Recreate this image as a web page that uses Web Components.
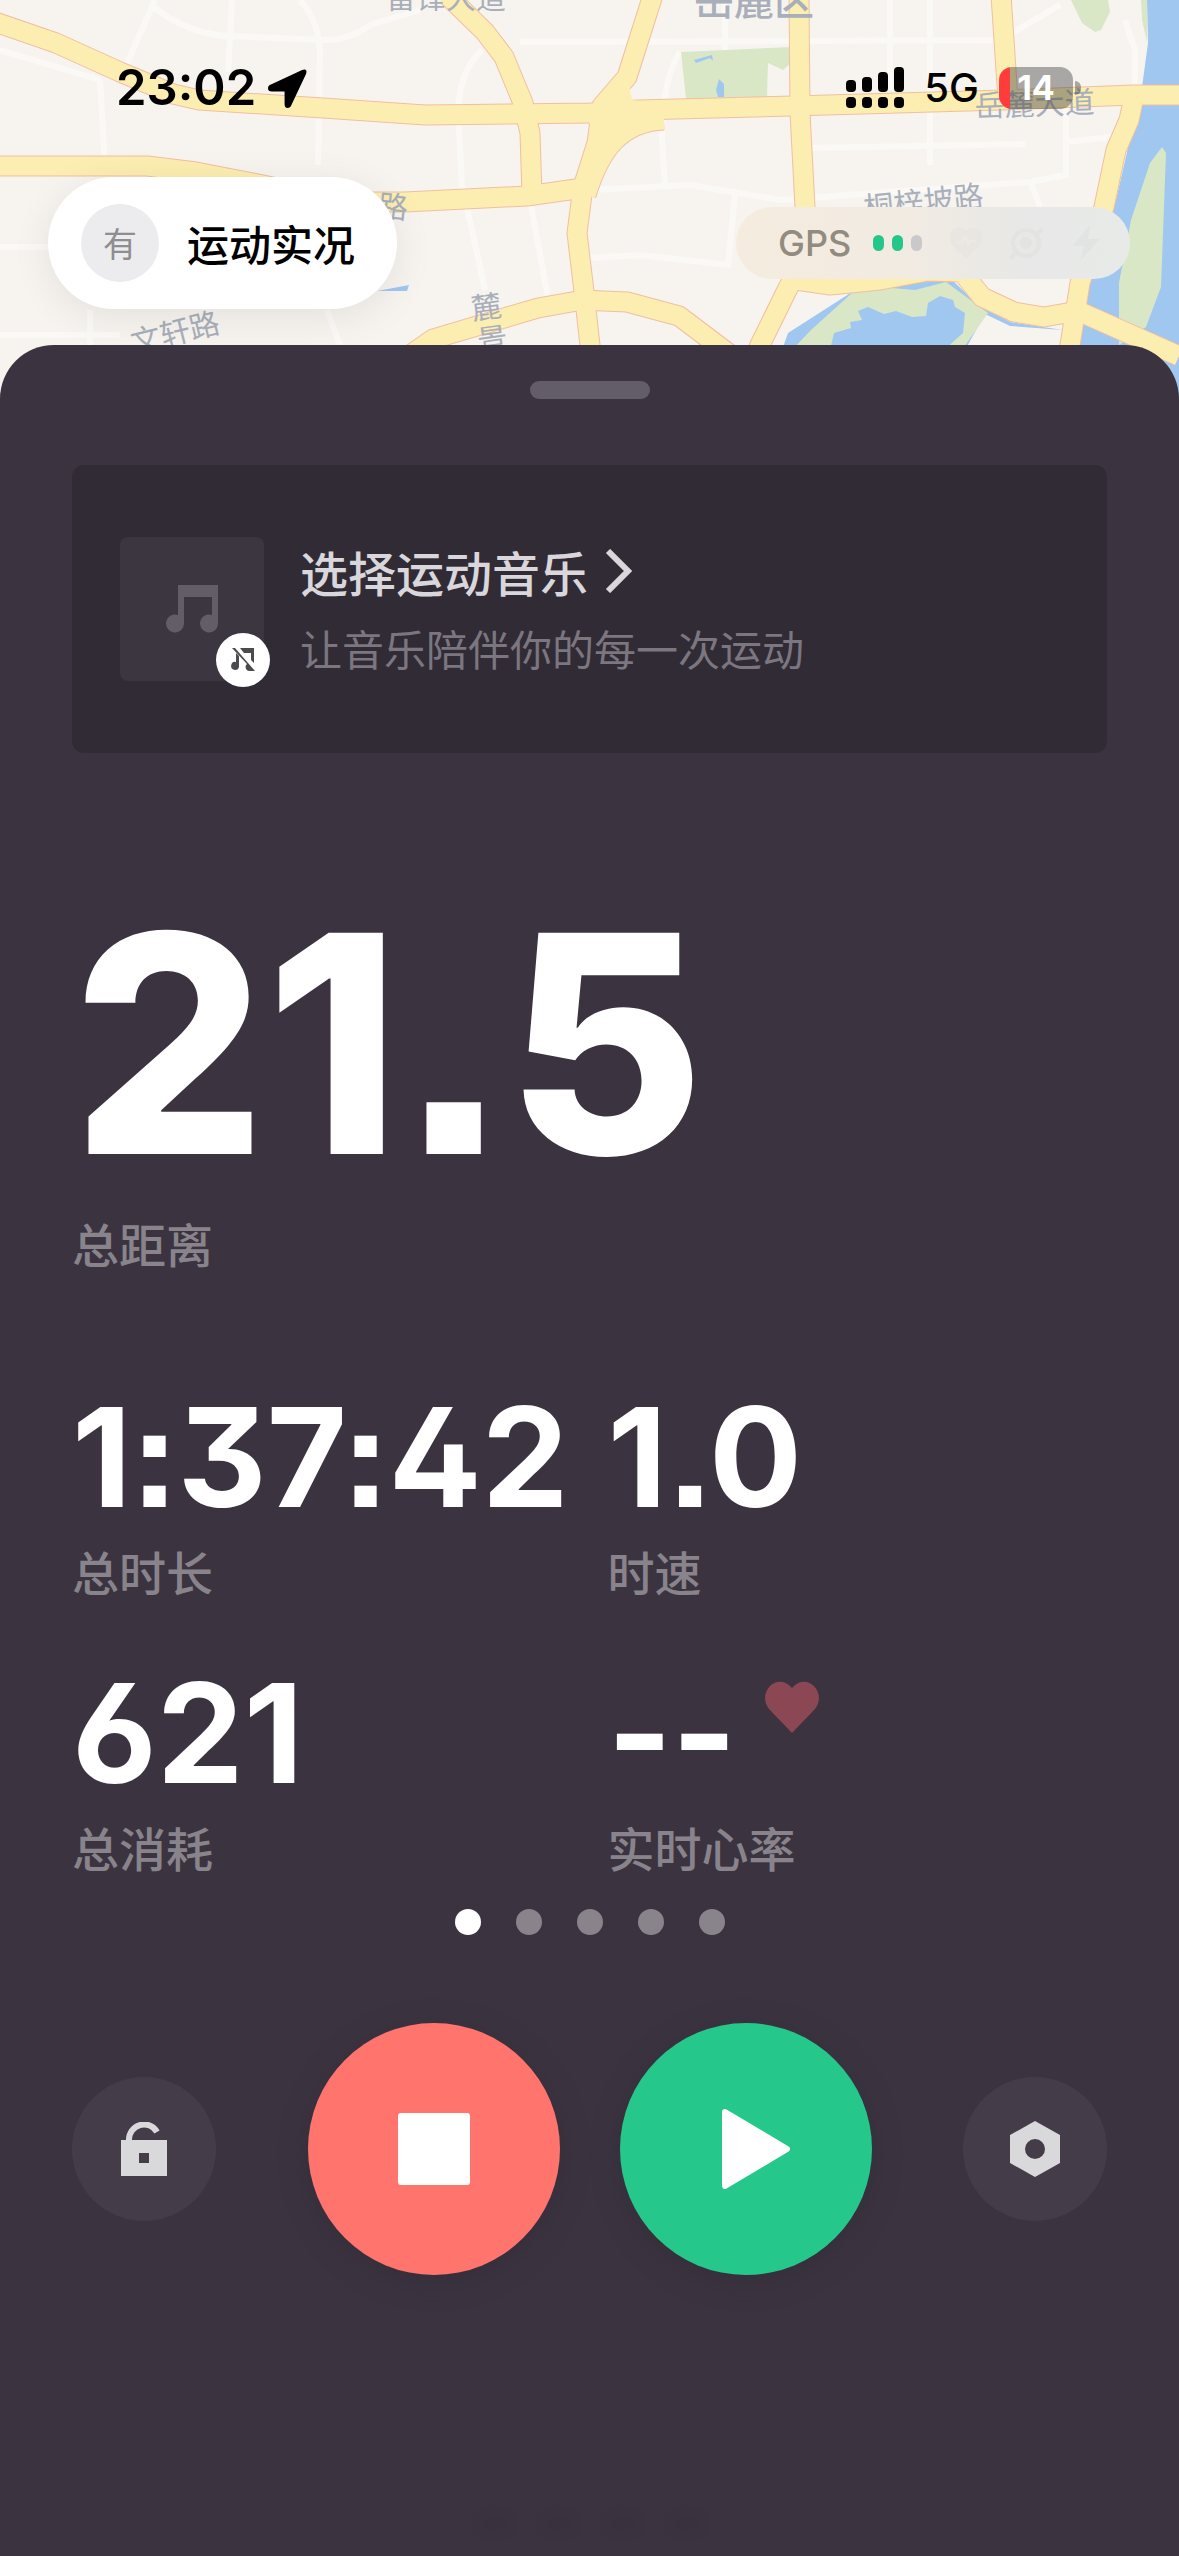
<!DOCTYPE html>
<html lang="zh-CN">
<head>
<meta charset="utf-8">
<meta name="viewport" content="width=device-width, initial-scale=1">
<title>运动实况</title>
<style>
  body {
    margin: 0;
    background: #3b3440;
    font-family: Inter, "Noto Sans CJK SC", sans-serif;
  }
</style>
</head>
<body>
<workout-app></workout-app>

<script>
class MapView extends HTMLElement {
  connectedCallback() {
    this.attachShadow({ mode: 'open' });
    this.shadowRoot.innerHTML = `
      <style>
        :host { display: block; overflow: hidden; background: #f7f4f0; }
        svg { display: block; width: 100%; height: 100%; }
        .street { fill: none; stroke: #fbf9f6; stroke-width: 6; }
        .edge { fill: none; stroke: #f1bfa0; stroke-width: 21; stroke-linejoin: round; }
        .road { fill: none; stroke: #fcedb0; stroke-width: 19; stroke-linejoin: round; }
        .water { fill: #a0c7f0; }
        .park { fill: #d9e7c7; }
        text { font-family: "Noto Sans CJK SC", sans-serif; font-size: 30px; fill: #a9afba; }
        .district { font-size: 40px; font-weight: 500; }
      </style>
      <svg viewBox="0 0 1179 420" preserveAspectRatio="xMidYMin slice" aria-hidden="true">
        <defs>
          <g id="roads">
            <path d="M-5 22 L56 43 L120 72 L173 94 L199 100 L323 108 L425 115 L590 113 L638 110 L792 106 L1003 100 L1134 95 L1184 95"/>
            <path d="M-5 166 H147 L196 172 L263 185 L323 198 L372 202 L405 202 L527 196 L583 188"/>
            <path d="M447 -5 L485 32 L504 57 L523 103 L530 133 L532 196"/>
            <path d="M653 -5 L627 77 L602 106 L597 143 L583 187 L577 233 L583 283 L590 345 V420"/>
            <path d="M664 120 C620 122 600 150 586 195"/>
            <path d="M799 -5 L800 113 L805 207 L804 260 L788 288 L760 345 L730 420"/>
            <path d="M580 300 L627 302 L679 316 L728 353 L760 400"/>
            <path d="M400 362 L433 339 L538 308 L583 300"/>
            <path d="M796 280 L830 285 L880 280 L928 271 L962 272 L982 297 L1014 312 L1044 317 L1078 311 L1179 356"/>
            <path d="M1001 -5 L1008 100"/>
            <path d="M1134 97 L1129 120 L1116 150 L1104 207 L1080 283 L1070 345 V420"/>
          </g>
        </defs>
        <g class="street">
          <path d="M155 0 L125 68 M155 8 Q190 35 230 36 L325 40 Q350 40 370 25 L420 10 M232 0 L228 72 M300 0 Q318 20 320 50 L318 165 M100 80 L105 166 M0 50 L100 80 M482 50 Q460 70 458 110 L462 185 L485 290 M590 42 L1000 40 L1060 5 M725 0 V50 M680 52 Q662 80 662 140 L665 185 M930 0 V165 M890 0 V90 M810 148 L1025 144 M1066 100 V175 L1030 182 L780 200 L690 185 L590 190 M1066 142 L1130 135 M735 195 L728 265 L640 255 L590 258 M1125 20 L1135 50 V90 M0 247 H60 M90 310 V345 M0 335 H120 M530 200 L548 298 M327 310 L340 345 M1030 180 L1040 207 M520 42 H590"/>
        </g>
        <path class="water" d="M1147 0 L1148 43 L1142 87 L1116 200 L1078 317 L1075 420 H1179 V0 Z"/>
        <path class="park" d="M1141 0 H1147 V42 L1142 20 Z M1162 147 L1150 163 L1131 220 L1119 283 V345 L1146 327 L1161 287 L1166 153 Z"/>
        <path class="park" d="M681 52 L792 47 L791 63 L783 70 L768 63 L767 97 L686 99 Z M1071 0 H1108 L1110 12 L1101 30 L1095 32 L1082 23 Z M1048 18 L1062 4 L1056 10 Z"/>
        <path class="water" d="M694 60 L712 55 L713 61 L710 58 L696 63 Z M719 79 L724 84 V97 H718 L716 90 Z M377 291 L409 285 L407 291 Z"/>
        <path class="water" d="M782 350 L788 333 L852 292 L890 283 L950 278 L973 300 L1010 322 L1063 330 L1010 326 L985 314 L965 350 Z"/>
        <path class="park" d="M792 350 L811 330 L852 293 L880 287 L915 290 L946 282 L988 313 L962 350 Z"/>
        <path class="water" d="M830 350 L834 333 L851 328 L850 322 L862 320 L858 311 L868 307 L884 314 L896 311 L912 317 L926 316 L928 303 L940 296 L953 300 L955 307 L965 313 L963 333 L944 350 Z"/>
        <use class="edge" href="#roads"/>
        <use class="road" href="#roads"/>
        <path d="M588 120 L604 95 L628 80 L632 100 L660 104 V118 L622 134 L602 150 Z" fill="#fcedb0"/>
        <text x="386" y="8">雷锋大道</text>
        <text class="district" x="694" y="15">岳麓区</text>
        <text transform="translate(975 117) rotate(-2)">岳麓大道</text>
        <text transform="translate(865 219) rotate(-6)">桐梓坡路</text>
        <text transform="translate(377 216) rotate(6)">路</text>
        <text transform="translate(134 354) rotate(-14)">文轩路</text>
        <text transform="translate(473 320) rotate(-8)">麓</text>
        <text transform="translate(479 352) rotate(-8)">景</text>
      </svg>`;
  }
}

class StatusBar extends HTMLElement {
  connectedCallback() {
    this.attachShadow({ mode: 'open' });
    this.shadowRoot.innerHTML = `
      <style>
        :host { display: flex; justify-content: space-between; align-items: center; height: 48px; padding: 0 98px 0 116px; color: #000; }
        div { display: flex; align-items: center; }
        .left { gap: 12px; font-size: 49px; font-weight: 600; line-height: 48px; }
        .right { gap: 20px; font-size: 40px; font-weight: 500; line-height: 48px; }
        svg { display: block; }
        .power { gap: 2px; }
        .battery {
          box-sizing: border-box; width: 74px; height: 42px; border-radius: 13px; justify-content: center;
          background: linear-gradient(90deg, #ff3b3b 11px, rgba(60, 60, 60, .42) 11px);
          color: #fff; font-size: 34px; font-weight: 700; line-height: 42px;
        }
        .nub { width: 6px; height: 14px; border-radius: 0 6px 6px 0; background: rgba(60, 60, 60, .42); }
      </style>
      <div class="left">
        <span>23:02</span>
        <svg width="39" height="39" viewBox="0 0 40 40"><path d="M39 5 L24 37 Q23 40 20 40 Q17 40 17 36 V23 H4 Q0 23 0 20 Q0 17 3 16 L35 1 Q41 -1 39 5 Z"/></svg>
      </div>
      <div class="right">
        <svg width="58" height="42" viewBox="0 0 58 42">
          <rect x="0" y="13" width="10" height="12" rx="4"/><rect x="16" y="10" width="10" height="15" rx="4"/>
          <rect x="32" y="5" width="10" height="20" rx="4"/><rect x="48" y="0" width="10" height="25" rx="4"/>
          <rect x="0" y="30" width="10" height="11" rx="4"/><rect x="16" y="30" width="10" height="11" rx="4"/>
          <rect x="32" y="30" width="10" height="11" rx="4"/><rect x="48" y="30" width="10" height="11" rx="4"/>
        </svg>
        <span>5G</span>
        <div class="power"><div class="battery">14</div><i class="nub"></i></div>
      </div>`;
  }
}

class LivePill extends HTMLElement {
  connectedCallback() {
    this.attachShadow({ mode: 'open' });
    this.shadowRoot.innerHTML = `
      <style>
        :host { display: block; }
        button {
          display: flex; align-items: center; gap: 28px; height: 132px; padding: 0 42px 0 33px;
          border: 0; border-radius: 66px; background: #fff; color: #000;
          box-shadow: 0 8px 40px rgba(0, 0, 0, .08);
          font: 500 42px/60px "Noto Sans CJK SC", sans-serif;
        }
        .avatar { width: 78px; height: 78px; border-radius: 50%; background: #ececee; color: #8e8e90; font-size: 34px; font-weight: 400; line-height: 78px; }
      </style>
      <button type="button"><span class="avatar"><slot name="avatar"></slot></span><slot></slot></button>`;
  }
}

class GpsStatus extends HTMLElement {
  connectedCallback() {
    this.attachShadow({ mode: 'open' });
    this.shadowRoot.innerHTML = `
      <style>
        :host {
          display: flex; align-items: center; box-sizing: border-box; width: 394px; height: 72px; padding: 0 30px 0 42px;
          border-radius: 36px; background: linear-gradient(90deg, #f5ecdf, #f2ebe2 40%, #e7e8e7 75%, #e8eae8);
          color: #928b80; font-size: 36px; font-weight: 500; line-height: 74px;
        }
        .dots { display: flex; gap: 8px; margin: 0 26px 0 22px; }
        .dots i { width: 11px; height: 16px; border-radius: 6px; background: #cac8ca; }
        .dots .on { background: #24c789; }
        .icons { display: flex; gap: 24px; }
        svg { display: block; fill: #e9e5e0; }
      </style>
      <span>GPS</span>
      <span class="dots"><i class="on"></i><i class="on"></i><i></i></span>
      <span class="icons">
        <svg width="36" height="36" viewBox="0 0 36 36"><path d="M18 34 L4 20 Q-2 10 6 4 Q13 0 18 6 Q23 0 30 4 Q38 10 32 20 Z"/><path d="M8 17 H14 L17 12 L20 19 L22 16 H28" fill="none" stroke="#ece8e3" stroke-width="3"/></svg>
        <svg width="36" height="36" viewBox="0 0 36 36"><path d="M29 9 L34 4 M7 29 L2 34" fill="none" stroke="#e3e3e1" stroke-width="4"/><circle cx="18" cy="18" r="13" fill="none" stroke="#e3e3e1" stroke-width="4"/><circle cx="18" cy="18" r="6" fill="#e3e3e1"/></svg>
        <svg width="36" height="36" viewBox="0 0 36 36"><path d="M22 0 L4 21 H16 L12 36 L32 14 H20 Z" fill="#e2e4e3"/></svg>
      </span>`;
  }
}

class MusicCard extends HTMLElement {
  connectedCallback() {
    this.attachShadow({ mode: 'open' });
    this.shadowRoot.innerHTML = `
      <style>
        :host { display: block; }
        a {
          display: flex; align-items: center; gap: 36px; box-sizing: border-box; height: 288px; padding: 0 48px;
          border-radius: 12px; background: #312b36; color: #d9d7db; text-decoration: none;
          font-family: "Noto Sans CJK SC", sans-serif;
        }
        .cover { position: relative; display: grid; place-items: center; flex: none; width: 144px; height: 144px; border-radius: 8px; background: #3c3640; }
        .mute { position: absolute; right: -6px; bottom: -6px; display: grid; place-items: center; width: 54px; height: 54px; border-radius: 50%; background: #fff; }
        svg { display: block; }
        .text { display: flex; flex-direction: column; gap: 12px; padding-bottom: 4px; }
        .title { display: flex; align-items: center; gap: 16px; font-size: 48px; font-weight: 500; line-height: 70px; }
        .hint { font-size: 42px; line-height: 60px; color: #7b767f; }
      </style>
      <a href="#music">
        <span class="cover">
          <svg width="52" height="48" viewBox="0 0 52 48" fill="#625d66"><path d="M12 0 H52 V39 A9 9 0 1 1 46 30 V12 H18 V39 A9 9 0 1 1 12 30 Z"/></svg>
          <span class="mute"><svg width="24" height="24" viewBox="0 0 24 24" fill="#4b4a4d"><path d="M9 0 H23 V15 L20 12 V5 H13 Z M5 5 L8 8 V19 A4 4 0 1 1 5 14 Z M1 0 H4 L24 23 H18 A4 4 0 0 1 16 16 Z"/></svg></span>
        </span>
        <span class="text">
          <span class="title"><slot></slot>
            <svg width="30" height="44" viewBox="0 0 30 44" fill="none" stroke="#d9d7db" stroke-width="6"><path d="M4 2 L24 22 L4 42"/></svg>
          </span>
          <span class="hint"><slot name="hint"></slot></span>
        </span>
      </a>`;
  }
}

class StatItem extends HTMLElement {
  connectedCallback() {
    this.attachShadow({ mode: 'open' });
    this.shadowRoot.innerHTML = `
      <style>
        :host { display: flex; flex-direction: column; gap: 32px; }
        .value {
          display: flex; gap: 28px; color: #fff; font: 700 138px/104px Inter, sans-serif;
          /* open digits, flat-top three, square punctuation, colon on the baseline */
          font-feature-settings: "ss01", "cv09", "ss07", "calt" 0;
        }
        .label { color: #89848c; font: 500 47px/60px "Noto Sans CJK SC", sans-serif; }
        :host([large]) { gap: 60px; }
        :host([large]) .value { font-size: 304px; font-weight: 800; line-height: 220px; }
      </style>
      <div class="value"><slot></slot><slot name="icon"></slot></div>
      <div class="label">${this.getAttribute('label')}</div>`;
  }
}

class PageDots extends HTMLElement {
  connectedCallback() {
    this.attachShadow({ mode: 'open' });
    const count = Number(this.getAttribute('count'));
    const dots = Array.from({ length: count }, (_, i) =>
      `<button type="button" aria-label="${i + 1}" ${i === 0 ? 'class="active"' : ''}></button>`).join('');
    this.shadowRoot.innerHTML = `
      <style>
        :host { display: flex; justify-content: center; gap: 35px; }
        button { width: 26px; height: 26px; padding: 0; border: 0; border-radius: 50%; background: #89848c; }
        .active { background: #fff; }
      </style>${dots}`;

    this.shadowRoot.querySelectorAll('button').forEach(dot => {
      dot.addEventListener('click', () => {
        this.shadowRoot.querySelector('.active').classList.remove('active');
        dot.classList.add('active');
      });
    });
  }
}

class RoundButton extends HTMLElement {
  connectedCallback() {
    this.attachShadow({ mode: 'open' });
    this.shadowRoot.innerHTML = `
      <style>
        :host { display: block; --size: 144px; --fill: #443d49; }
        :host([kind="stop"]) { --size: 252px; --fill: #ff746c; --shadow: 0 6px 30px rgba(40, 34, 48, .3); }
        :host([kind="play"]) { --size: 252px; --fill: #26c78a; --shadow: 0 6px 30px rgba(40, 34, 48, .3); }
        button {
          display: grid; place-items: center; width: var(--size); height: var(--size); padding: 0;
          border: 0; border-radius: 50%; background: var(--fill); box-shadow: var(--shadow, none);
        }
        ::slotted(svg) { display: block; }
      </style>
      <button type="button" aria-label="${this.getAttribute('label')}"><slot></slot></button>`;
  }
}

class WorkoutApp extends HTMLElement {
  connectedCallback() {
    this.attachShadow({ mode: 'open' });
    this.shadowRoot.innerHTML = `
      <style>
        :host { display: flex; flex-direction: column; position: relative; min-height: 100vh; }
        map-view { position: absolute; inset: 0 0 auto; height: 420px; }
        header { position: relative; padding: 64px 0 36px; }
        .floating { display: flex; justify-content: space-between; align-items: center; padding: 65px 49px 0 48px; }
        main {
          position: relative; flex: 1; display: flex; flex-direction: column; padding: 36px 72px 0;
          border-radius: 54px 54px 0 0; background: #3b3440;
        }
        .handle { align-self: center; width: 120px; height: 18px; border-radius: 9px; background: #635d69; }
        music-card { margin-top: 66px; }
        .total { margin-top: 180px; }
        .stats { display: grid; grid-template-columns: repeat(2, minmax(0, 1fr)); gap: 80px 36px; margin-top: 132px; }
        page-dots { margin-top: 32px; }
        .controls, .primary { display: flex; justify-content: space-between; align-items: center; }
        .controls { margin-top: 88px; }
        .primary { gap: 60px; }
        footer { display: flex; justify-content: center; align-items: center; gap: 30px; height: 66px; margin-top: auto; filter: blur(6px); opacity: .3; }
        footer i { width: 34px; height: 22px; border-radius: 8px; background: #342d3b; }
      </style>
      <map-view></map-view>
      <header>
        <status-bar></status-bar>
        <div class="floating">
          <live-pill><span slot="avatar">有</span>运动实况</live-pill>
          <gps-status></gps-status>
        </div>
      </header>
      <main>
        <div class="handle"></div>
        <music-card>选择运动音乐<span slot="hint">让音乐陪伴你的每一次运动</span></music-card>
        <stat-item class="total" large label="总距离">21.5</stat-item>
        <div class="stats">
          <stat-item label="总时长">1:37:42</stat-item>
          <stat-item label="时速">1.0</stat-item>
          <stat-item label="总消耗">621</stat-item>
          <stat-item label="实时心率">--<svg slot="icon" width="54" height="52" viewBox="0 0 54 52" fill="#8b4753"><path d="M27 52 L4 28 C-9 11 13 -10 27 7 C41 -10 63 11 50 28 Z"/></svg></stat-item>
        </div>
        <page-dots count="5"></page-dots>
        <div class="controls">
          <round-button label="锁定">
            <svg width="46" height="54" viewBox="0 0 46 54"><path d="M8 20 V18 A15 15 0 0 1 36 10" fill="none" stroke="#d9d8db" stroke-width="6"/><path d="M0 18 H46 V54 H0 Z" fill="#d9d8db"/><path d="M18 31 H28 V41 H18 Z" fill="#443d49"/></svg>
          </round-button>
          <div class="primary">
            <round-button kind="stop" label="结束">
              <svg width="72" height="72" viewBox="0 0 72 72"><rect width="72" height="72" rx="3" fill="#fff"/></svg>
            </round-button>
            <round-button kind="play" label="继续">
              <svg width="90" height="80" viewBox="0 0 90 80"><path d="M24 3 L86 40 L24 77 Z" fill="#fff" stroke="#fff" stroke-width="6" stroke-linejoin="round"/></svg>
            </round-button>
          </div>
          <round-button label="设置">
            <svg width="50" height="56" viewBox="0 0 50 56"><path d="M25 0 L50 14 V42 L25 56 L0 42 V14 Z" fill="#d9d8db"/><circle cx="25" cy="28" r="10" fill="#443d49"/></svg>
          </round-button>
        </div>
        <footer aria-hidden="true"><i></i><i></i><i></i><i></i></footer>
      </main>`;
  }
}

customElements.define('map-view', MapView);
customElements.define('status-bar', StatusBar);
customElements.define('live-pill', LivePill);
customElements.define('gps-status', GpsStatus);
customElements.define('music-card', MusicCard);
customElements.define('stat-item', StatItem);
customElements.define('page-dots', PageDots);
customElements.define('round-button', RoundButton);
customElements.define('workout-app', WorkoutApp);
</script>
</body>
</html>
